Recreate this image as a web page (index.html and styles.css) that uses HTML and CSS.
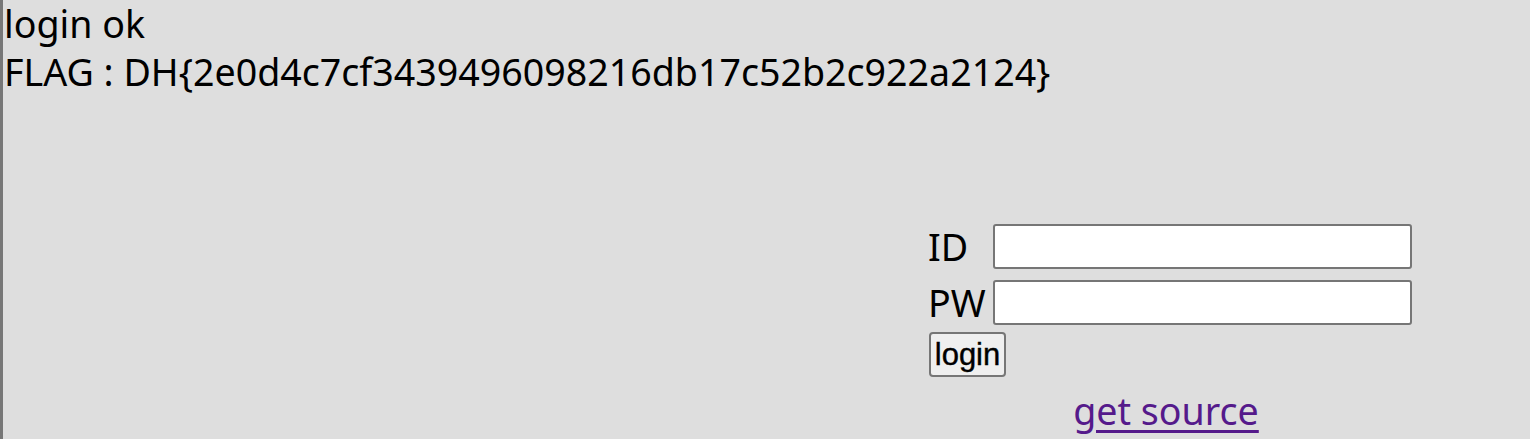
FILE: index.html
```html
<!DOCTYPE html>
<html>
<head>
<meta charset="utf-8">
<link rel="stylesheet" href="styles.css">
</head>
<body>
<div class="page">
  <div class="msg">login ok</div>
  <div class="msg">FLAG : DH{2e0d4c7cf3439496098216db17c52b2c922a2124}</div>
  <form class="login-form">
    <div class="row"><label class="lbl">ID</label><input class="field" type="text"></div>
    <div class="row"><label class="lbl">PW</label><input class="field" type="password"></div>
    <div class="btn-row"><button class="btn" type="button">login</button></div>
    <div class="link-row"><a class="src-link" href="#">get source</a></div>
  </form>
</div>
</body>
</html>
```
FILE: styles.css
```css
html, body {
  margin: 0;
  padding: 0;
  height: 100%;
}
body {
  background: #dedede;
  font-family: "Noto Sans", "Noto Sans CJK KR", sans-serif;
  color: #000;
}
.page {
  box-sizing: border-box;
  min-height: 100%;
  border-left: 3px solid #777777;
  padding-left: 1px;
}
.msg {
  font-size: 37.6px;
  line-height: 48px;
  white-space: nowrap;
}
.login-form {
  margin-left: 924px;
  margin-top: 126px;
  width: 484px;
  display: flex;
  flex-direction: column;
}
.row {
  display: flex;
  align-items: center;
  height: 49px;
  margin-bottom: 7px;
}
.lbl {
  width: 65px;
  font-size: 37.6px;
  line-height: 49px;
}
.field {
  box-sizing: border-box;
  width: 419px;
  height: 45px;
  margin: 0;
  border: 2px solid #767676;
  border-radius: 3px;
  background: #fff;
}
.btn-row {
  margin-top: -2px;
  padding-left: 1px;
}
.btn {
  box-sizing: border-box;
  width: 77px;
  height: 45px;
  margin: 0;
  padding: 0;
  font-family: "Liberation Sans", Arial, sans-serif;
  font-size: 31px;
  color: #000;
  background: #efefef;
  border: 2px solid #767676;
  border-radius: 4px;
  -webkit-text-stroke: 0.4px #000;
}
.link-row {
  text-align: center;
  margin-top: 10px;
  padding-right: 8px;
}
.src-link {
  font-size: 37.6px;
  line-height: 48px;
  color: #551a8b;
  text-underline-offset: 5px;
}
```
